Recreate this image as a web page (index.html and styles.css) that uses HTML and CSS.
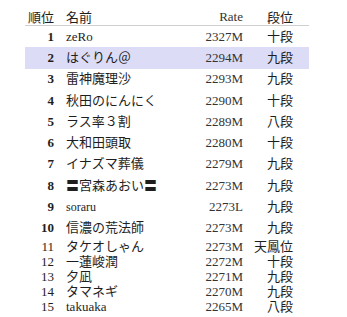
FILE: index.html
```html
<!DOCTYPE html>
<html lang="ja">
<head>
<meta charset="utf-8">
<link rel="stylesheet" href="styles.css">
</head>
<body>
<div class="ranking">
  <div class="row head">
    <div class="c-rank">順位</div><div class="c-name">名前</div><div class="c-rate">Rate</div><div class="c-dan">段位</div>
  </div>
  <div class="row top"><div class="c-rank">1</div><div class="c-name">zeRo</div><div class="c-rate">2327M</div><div class="c-dan">十段</div></div>
  <div class="row top hl"><div class="c-rank">2</div><div class="c-name">はぐりん＠</div><div class="c-rate">2294M</div><div class="c-dan">九段</div></div>
  <div class="row top"><div class="c-rank">3</div><div class="c-name">雷神魔理沙</div><div class="c-rate">2293M</div><div class="c-dan">九段</div></div>
  <div class="row top"><div class="c-rank">4</div><div class="c-name">秋田のにんにく</div><div class="c-rate">2290M</div><div class="c-dan">十段</div></div>
  <div class="row top"><div class="c-rank">5</div><div class="c-name">ラス率３割</div><div class="c-rate">2289M</div><div class="c-dan">八段</div></div>
  <div class="row top"><div class="c-rank">6</div><div class="c-name">大和田頭取</div><div class="c-rate">2280M</div><div class="c-dan">十段</div></div>
  <div class="row top"><div class="c-rank">7</div><div class="c-name">イナズマ葬儀</div><div class="c-rate">2279M</div><div class="c-dan">九段</div></div>
  <div class="row top"><div class="c-rank">8</div><div class="c-name">〓宮森あおい〓</div><div class="c-rate">2273M</div><div class="c-dan">九段</div></div>
  <div class="row top"><div class="c-rank">9</div><div class="c-name small">soraru</div><div class="c-rate">2273L</div><div class="c-dan">九段</div></div>
  <div class="row top"><div class="c-rank">10</div><div class="c-name">信濃の荒法師</div><div class="c-rate">2273M</div><div class="c-dan">九段</div></div>
  <div class="row rest"><div class="c-rank">11</div><div class="c-name">タケオしゃん</div><div class="c-rate">2273M</div><div class="c-dan">天鳳位</div></div>
  <div class="row rest"><div class="c-rank">12</div><div class="c-name">一蓮峻潤</div><div class="c-rate">2272M</div><div class="c-dan">十段</div></div>
  <div class="row rest"><div class="c-rank">13</div><div class="c-name">夕凪</div><div class="c-rate">2271M</div><div class="c-dan">九段</div></div>
  <div class="row rest"><div class="c-rank">14</div><div class="c-name">タマネギ</div><div class="c-rate">2270M</div><div class="c-dan">九段</div></div>
  <div class="row rest"><div class="c-rank">15</div><div class="c-name">takuaka</div><div class="c-rate">2265M</div><div class="c-dan">八段</div></div>
</div>
</body>
</html>
```
FILE: styles.css
```css
html, body {
  margin: 0;
  padding: 0;
  background: #ffffff;
}
body {
  padding: 8px 0 0 25px;
  font-family: "Liberation Serif", "Noto Sans CJK JP", serif;
  font-size: 13px;
  color: #1e1e1e;
}
.ranking {
  width: 284px;
}
.row {
  display: grid;
  grid-template-columns: 29px 129px 60px 50px;
  column-gap: 0;
  padding-right: 4px;
  align-items: center;
}
.row > div {
  white-space: nowrap;
}
.c-rank {
  text-align: right;
}
.c-name {
  padding-left: 12px;
}
.c-rate {
  text-align: right;
  color: #333;
}
.c-dan {
  text-align: right;
}
.head {
  height: 17px;
  border-bottom: 1px solid #cfcfcf;
  line-height: 17px;
}
.head .c-rank {
  text-align: left;
  padding-left: 3px;
  overflow: visible;
}
.head .c-name, .head .c-dan, .head .c-rank {
  font-family: "Noto Sans CJK JP", sans-serif;
}
.top {
  height: 21.3px;
  line-height: 16px;
}
.top .c-rank {
  font-weight: bold;
}
.rest {
  height: 15px;
  line-height: 15px;
}
.hl {
  background: #dcdcf7;
}
.small {
  font-size: 12px;
}
```
